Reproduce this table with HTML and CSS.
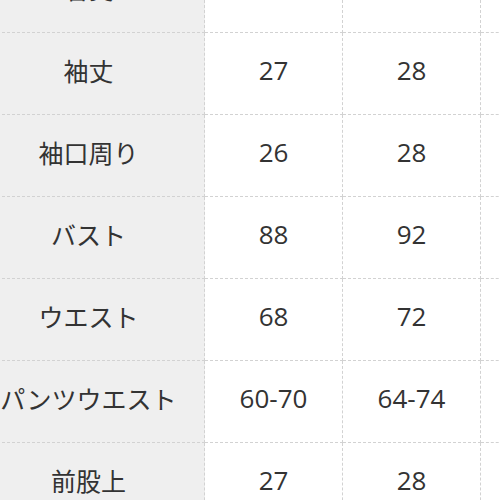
FILE: index.html
```html
<!DOCTYPE html>
<html lang="ja">
<head>
<meta charset="utf-8">
<link rel="stylesheet" href="styles.css">
</head>
<body>
<div class="wrap">
<table class="size">
<colgroup>
<col class="c-label">
<col class="c-val">
<col class="c-val">
<col class="c-rest">
</colgroup>
<tbody>
<tr><th>着丈</th><td>60</td><td>62</td><td></td></tr>
<tr><th>袖丈</th><td>27</td><td>28</td><td></td></tr>
<tr><th>袖口周り</th><td>26</td><td>28</td><td></td></tr>
<tr><th>バスト</th><td>88</td><td>92</td><td></td></tr>
<tr><th>ウエスト</th><td>68</td><td>72</td><td></td></tr>
<tr><th>パンツウエスト</th><td>60-70</td><td>64-74</td><td></td></tr>
<tr><th>前股上</th><td>27</td><td>28</td><td></td></tr>
</tbody>
</table>
</div>
</body>
</html>
```
FILE: styles.css
```css
html, body {
  margin: 0;
  padding: 0;
  background: #ffffff;
  overflow: hidden;
}
.wrap {
  width: 500px;
  height: 500px;
  overflow: hidden;
}
.size {
  border-collapse: collapse;
  table-layout: fixed;
  width: 609px;
  margin-top: -50px;
  margin-left: -28px;
  font-family: "Noto Sans CJK JP", "Noto Sans", sans-serif;
  font-size: 25px;
  color: #333333;
}
.c-label { width: 232px; }
.c-val { width: 138px; }
.c-rest { width: 101px; }
.size th, .size td {
  height: 82px;
  padding: 0 0 7px 0;
  box-sizing: border-box;
  text-align: center;
  vertical-align: middle;
  border: 1px dashed #d2d2d2;
  font-weight: normal;
  white-space: nowrap;
}
.size th {
  background: #efefef;
}
.size td {
  background: #ffffff;
  font-family: "Open Sans", "Noto Sans", sans-serif;
  font-size: 26px;
}
```
